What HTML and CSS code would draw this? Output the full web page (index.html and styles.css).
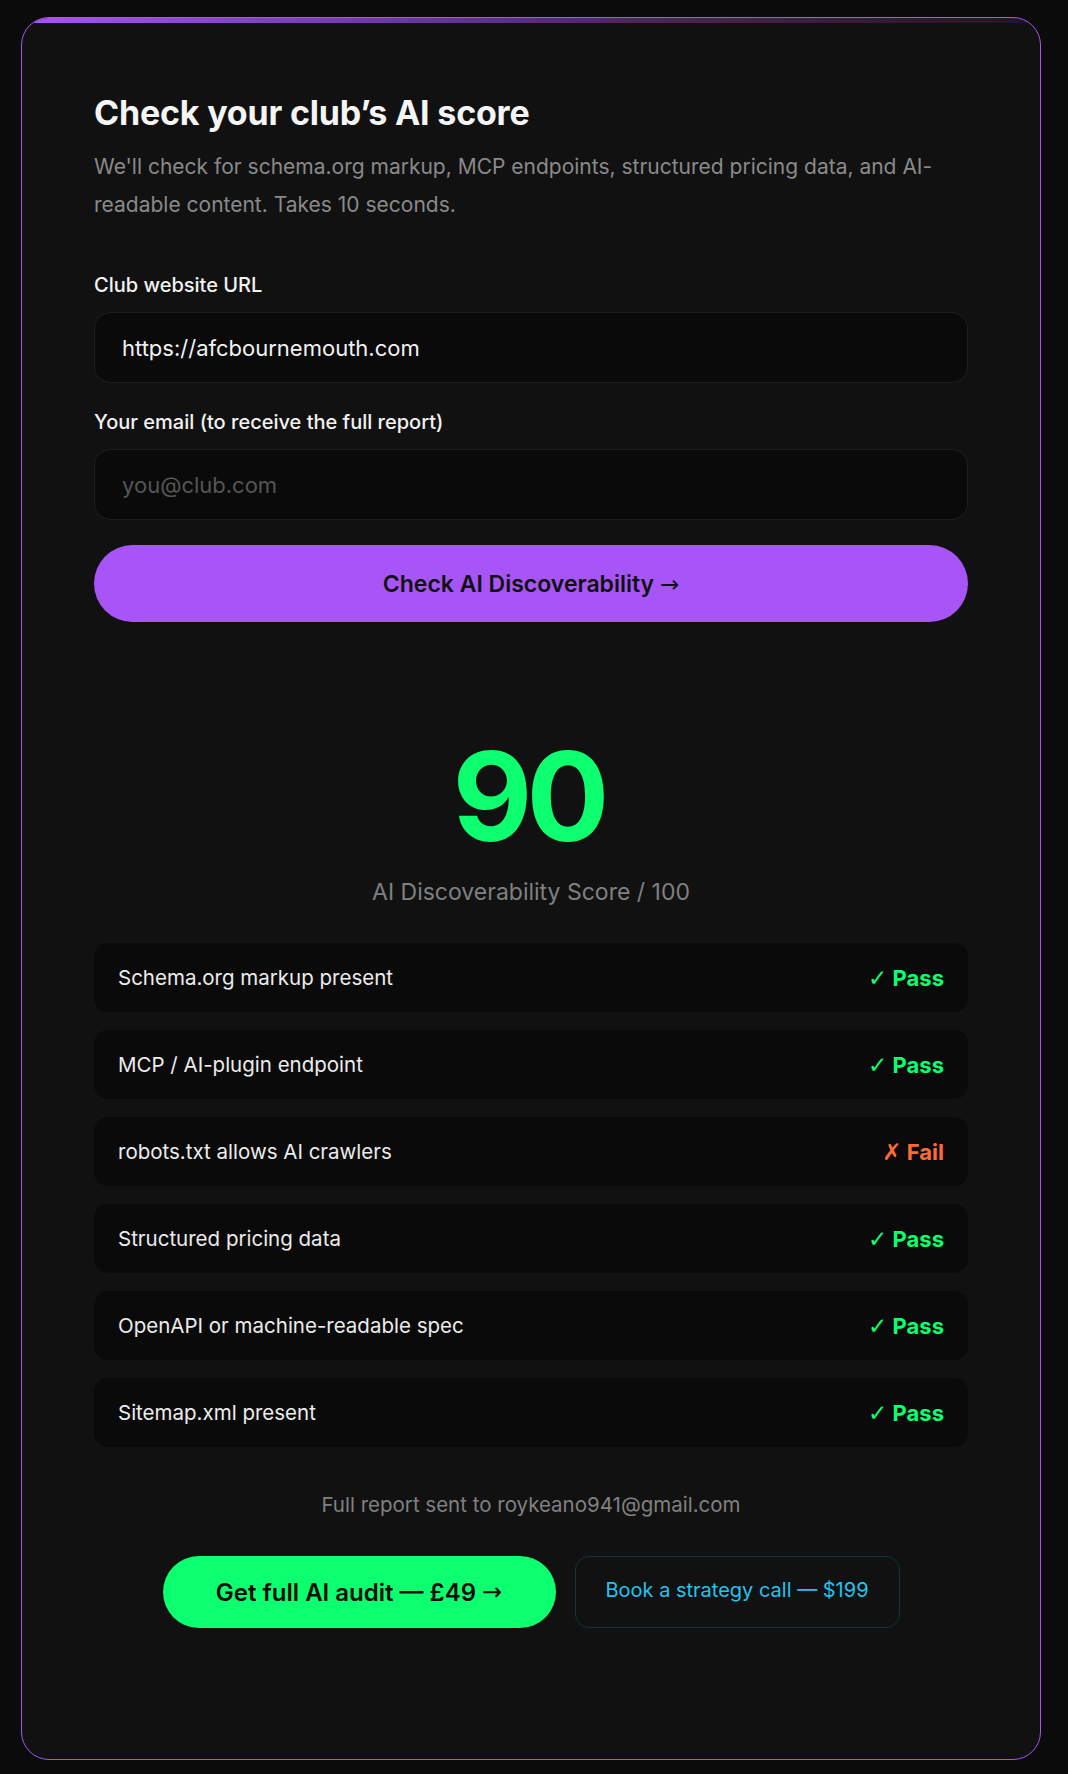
FILE: index.html
```html
<!DOCTYPE html>
<html lang="en">
<head>
<meta charset="utf-8">
<title>Check your club’s AI score</title>
<link rel="stylesheet" href="styles.css">
</head>
<body>
<main class="card">
  <h1 class="title">Check your club’s AI score</h1>
  <p class="desc">We'll check for schema.org markup, MCP endpoints, structured pricing data, and AI-readable content. Takes 10 seconds.</p>

  <form class="form">
    <label class="label" for="url">Club website URL</label>
    <input class="input" id="url" type="text" value="https://afcbournemouth.com">
    <label class="label label-2" for="email">Your email (to receive the full report)</label>
    <input class="input" id="email" type="email" placeholder="you@club.com">
    <button class="cta" type="button">Check AI Discoverability <span class="arrow">→</span></button>
  </form>

  <section class="result">
    <div class="score">90</div>
    <div class="score-label">AI Discoverability Score / 100</div>

    <ul class="checks">
      <li class="check"><span class="check-name">Schema.org markup present</span><span class="status pass"><span class="mark">✓</span> Pass</span></li>
      <li class="check"><span class="check-name">MCP / AI-plugin endpoint</span><span class="status pass"><span class="mark">✓</span> Pass</span></li>
      <li class="check"><span class="check-name">robots.txt allows AI crawlers</span><span class="status fail"><span class="mark">✗</span> Fail</span></li>
      <li class="check"><span class="check-name">Structured pricing data</span><span class="status pass"><span class="mark">✓</span> Pass</span></li>
      <li class="check"><span class="check-name">OpenAPI or machine-readable spec</span><span class="status pass"><span class="mark">✓</span> Pass</span></li>
      <li class="check"><span class="check-name">Sitemap.xml present</span><span class="status pass"><span class="mark">✓</span> Pass</span></li>
    </ul>

    <p class="sent">Full report sent to roykeano941@gmail.com</p>

    <div class="actions">
      <a class="btn-audit" href="#">Get full AI audit — £49&nbsp;<span class="arrow">→</span></a>
      <a class="btn-call" href="#">Book a strategy call — $199</a>
    </div>
  </section>
</main>
</body>
</html>
```

FILE: styles.css
```css
* { box-sizing: border-box; }

html, body {
  margin: 0;
  padding: 0;
  background: #0b0b0b;
}

body {
  font-family: "Inter", "Noto Sans", "DejaVu Sans", sans-serif;
  color: #f2f2f2;
  padding: 17px 0 13px 21px;
}

.card {
  position: relative;
  width: 1020px;
  background: #111111;
  border: 1px solid #a855f7;
  border-radius: 28px;
  padding: 77px 72px 131px;
  overflow: hidden;
}

.card::before {
  content: "";
  position: absolute;
  left: 0;
  right: 0;
  top: 0;
  height: 5px;
  background: linear-gradient(90deg, #a855f7 0%, rgba(168, 85, 247, 0.35) 60%, rgba(168, 85, 247, 0.08) 100%);
}

.title {
  margin: 0 0 17px;
  font-size: 34px;
  line-height: 36px;
  font-weight: 700;
  letter-spacing: -0.2px;
  color: #f5f5f5;
}

.desc {
  margin: 0;
  font-size: 21px;
  line-height: 37.5px;
  color: #8a8a8a;
}

.form {
  display: flex;
  flex-direction: column;
  margin-top: 50px;
}

.label {
  font-size: 20px;
  line-height: 24px;
  font-weight: 500;
  color: #f2f2f2;
  margin-bottom: 15px;
}

.label-2 { margin-top: 27px; }

.input {
  height: 71px;
  background: #0a0a0a;
  border: 1px solid #1e1e1e;
  border-radius: 16px;
  padding: 0 27px;
  font-family: inherit;
  font-size: 22px;
  color: #f2f2f2;
  outline: none;
}

.input::placeholder { color: #555555; }

.cta {
  margin-top: 25px;
  height: 77px;
  border: none;
  border-radius: 40px;
  background: #a855f7;
  color: #111111;
  font-family: inherit;
  font-size: 23px;
  font-weight: 600;
  cursor: pointer;
}

.arrow {
  font-family: "DejaVu Sans", sans-serif;
  font-weight: 400;
}

.result {
  margin-top: 112px;
  display: flex;
  flex-direction: column;
  align-items: stretch;
}

.score {
  text-align: center;
  font-size: 123px;
  line-height: 125px;
  font-weight: 700;
  letter-spacing: -6px;
  text-indent: -6px;
  color: #0cff6e;
}

.score-label {
  margin-top: 19px;
  text-align: center;
  font-size: 23px;
  line-height: 28px;
  color: #808080;
}

.checks {
  list-style: none;
  margin: 37px 0 0;
  padding: 0;
  display: flex;
  flex-direction: column;
  gap: 18px;
}

.check {
  height: 69px;
  display: flex;
  align-items: center;
  justify-content: space-between;
  padding: 0 24px;
  background: #0a0a0a;
  border-radius: 14px;
}

.check-name {
  font-size: 20.5px;
  color: #ececec;
}

.status {
  font-size: 22px;
  font-weight: 700;
}

.mark {
  font-family: "DejaVu Sans", sans-serif;
  font-weight: 400;
  font-size: 23px;
}

.status.pass { color: #0cff6e; }
.status.fail { color: #ff6b35; }

.sent {
  margin: 46px 0 0;
  text-align: center;
  font-size: 20.5px;
  line-height: 24px;
  color: #808080;
}

.actions {
  margin-top: 39px;
  display: flex;
  justify-content: center;
  gap: 19px;
}

.btn-audit,
.btn-call {
  height: 72px;
  display: flex;
  align-items: center;
  justify-content: center;
  text-decoration: none;
}

.btn-audit {
  width: 393px;
  border-radius: 36px;
  background: #0cff6e;
  color: #0b0b0b;
  font-size: 24px;
  font-weight: 600;
}

.btn-call {
  width: 325px;
  border-radius: 14px;
  border: 1px solid #12343c;
  color: #22c3ee;
  font-size: 20px;
  padding-bottom: 4px;
}
```
